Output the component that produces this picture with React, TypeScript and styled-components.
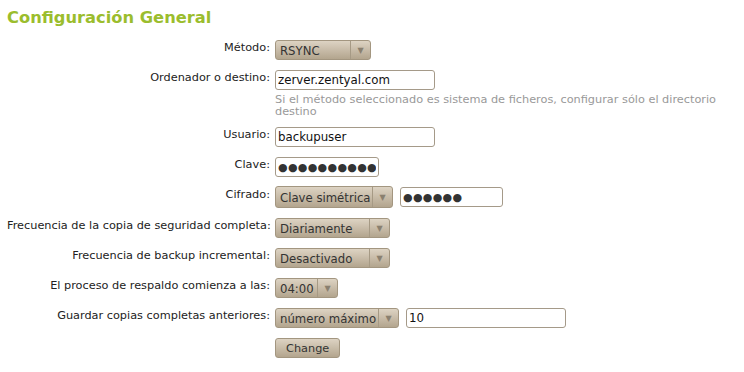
import styled, { createGlobalStyle } from 'styled-components';

const GlobalStyle = createGlobalStyle`
  body {
    margin: 0;
    background: #ffffff;
    font-family: 'DejaVu Sans', 'Liberation Sans', sans-serif;
    font-size: 11.3px;
    color: #222;
  }
`;

const Wrapper = styled.div`
  padding: 8px 7px;
`;

const Title = styled.h2`
  margin: 0 0 12px 0;
  font-size: 16.3px;
  font-weight: bold;
  color: #9bbd2d;
  line-height: 20px;
`;

const Form = styled.div`
  display: grid;
  grid-template-columns: 263px auto;
  column-gap: 5px;
  row-gap: 10px;
  align-items: start;
`;

const Label = styled.label`
  text-align: right;
  padding-top: 1px;
  line-height: 14px;
  white-space: nowrap;
`;

const Field = styled.div`
  display: flex;
  flex-direction: column;
  align-items: flex-start;
`;

const Inline = styled.div<{ lift?: boolean }>`
  display: flex;
  align-items: center;
  gap: 7px;
  margin-top: ${(p) => (p.lift ? '-1px' : '0')};
`;

const Select = styled.div<{ width: number; tall?: boolean }>`
  box-sizing: border-box;
  width: ${(p) => p.width}px;
  height: ${(p) => (p.tall ? 22 : 20)}px;
  display: flex;
  align-items: stretch;
  border: 1px solid #a39680;
  border-radius: 3px;
  background: linear-gradient(#ddd3c3, #b3a58e);
  color: #333;
  font-size: 11.7px;
`;

const SelectValue = styled.span`
  flex: 1;
  min-width: 0;
  padding: 1px 0 0 4px;
  display: flex;
  align-items: center;
  white-space: nowrap;
`;

const SelectArrow = styled.span`
  width: 19px;
  flex-shrink: 0;
  border-left: 1px solid #a69a85;
  display: flex;
  align-items: center;
  justify-content: center;
  color: #8a806f;
  font-size: 8px;
`;

const Input = styled.input<{ width: number }>`
  box-sizing: border-box;
  width: ${(p) => p.width}px;
  height: 20px;
  padding: 0 2px;
  border: 1px solid #a59a89;
  border-radius: 3px;
  font-family: 'DejaVu Sans', sans-serif;
  font-size: 11.8px;
  color: #111;
  background: #fff;
  outline: none;
`;

const Dots = styled(Input)`
  font-size: 11px;
  letter-spacing: 0.3px;
  color: #333;
  padding: 0 2px;
`;

const Help = styled.div`
  margin: 4px 0 -1px 0;
  width: 450px;
  color: #999;
  line-height: 12px;
`;

const Button = styled.button`
  height: 20px;
  padding: 0 10px;
  border: 1px solid #a39680;
  border-radius: 3px;
  background: linear-gradient(#ddd3c3, #b3a58e);
  color: #333;
  font-family: 'DejaVu Sans', sans-serif;
  font-size: 11.3px;
`;

function Dropdown({
  value,
  width,
  tall,
}: {
  value: string;
  width: number;
  tall?: boolean;
}) {
  return (
    <Select width={width} tall={tall}>
      <SelectValue>{value}</SelectValue>
      <SelectArrow>▼</SelectArrow>
    </Select>
  );
}

export default function App() {
  return (
    <Wrapper>
      <GlobalStyle />
      <Title>Configuración General</Title>
      <Form>
        <Label>Método:</Label>
        <Field>
          <Dropdown value="RSYNC" width={96} />
        </Field>

        <Label>Ordenador o destino:</Label>
        <Field>
          <Input width={160} defaultValue="zerver.zentyal.com" />
          <Help>
            Si el método seleccionado es sistema de ficheros, configurar sólo el
            directorio destino
          </Help>
        </Field>

        <Label>Usuario:</Label>
        <Field>
          <Input width={160} defaultValue="backupuser" />
        </Field>

        <Label>Clave:</Label>
        <Field>
          <Dots width={104} readOnly value="●●●●●●●●●●●" />
        </Field>

        <Label>Cifrado:</Label>
        <Field>
          <Inline lift>
            <Dropdown value="Clave simétrica" width={118} tall />
            <Dots width={103} readOnly value="●●●●●●" />
          </Inline>
        </Field>

        <Label>Frecuencia de la copia de seguridad completa:</Label>
        <Field>
          <Dropdown value="Diariamente" width={115} />
        </Field>

        <Label>Frecuencia de backup incremental:</Label>
        <Field>
          <Dropdown value="Desactivado" width={115} />
        </Field>

        <Label>El proceso de respaldo comienza a las:</Label>
        <Field>
          <Dropdown value="04:00" width={63} />
        </Field>

        <Label>Guardar copias completas anteriores:</Label>
        <Field>
          <Inline>
            <Dropdown value="número máximo" width={124} />
            <Input width={160} defaultValue="10" />
          </Inline>
        </Field>

        <span />
        <Field>
          <Button>Change</Button>
        </Field>
      </Form>
    </Wrapper>
  );
}
